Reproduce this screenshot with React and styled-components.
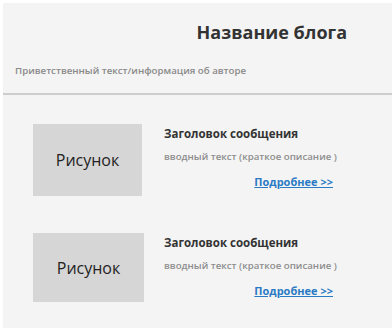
import React from 'react';
import styled, { createGlobalStyle } from 'styled-components';

const Global = createGlobalStyle`
  html, body { margin: 0; padding: 0; background: #ffffff; }
  body { font-family: "Open Sans", "Noto Sans", sans-serif; }
`;

const Page = styled.div`
  width: 392px;
  box-sizing: border-box;
  padding: 3px 0 4px 3px;
`;

const Board = styled.div`
  background: #f4f4f4;
`;

const Header = styled.header`
  height: 92px;
  box-sizing: border-box;
  padding: 17px 45px 0 12px;
  border-bottom: 2px solid #cdcdcd;
  display: flex;
  flex-direction: column;
`;

const BlogTitle = styled.h1`
  margin: 0;
  align-self: flex-end;
  font-size: 18px;
  line-height: 24px;
  font-weight: 700;
  color: #333333;
`;

const Greeting = styled.p`
  margin: 20px 0 0;
  font-size: 9.7px;
  line-height: 14px;
  font-weight: 600;
  color: #8a8a8a;
`;

const Feed = styled.main`
  padding: 29px 0 26px 30px;
  display: flex;
  flex-direction: column;
  gap: 37px;
`;

const Post = styled.article`
  display: grid;
  grid-template-columns: 131px 1fr;
  align-items: start;
`;

const Picture = styled.div`
  width: ${p => p.$w}px;
  height: ${p => p.$h}px;
  background: #d6d6d6;
  display: flex;
  align-items: center;
  justify-content: center;
  font-size: 16px;
  color: #222222;
`;

const Body = styled.div`
  width: 176px;
  padding-top: 2px;
  display: flex;
  flex-direction: column;
`;

const PostTitle = styled.h2`
  margin: 0;
  font-size: 11.5px;
  line-height: 15px;
  font-weight: 700;
  color: #333333;
`;

const Intro = styled.p`
  margin: 9px 0 0;
  font-size: 9.7px;
  line-height: 13px;
  font-weight: 600;
  color: #8e8e8e;
  white-space: nowrap;
`;

const More = styled.a`
  margin: 12px 7px 0 0;
  align-self: flex-end;
  font-size: 11px;
  line-height: 14px;
  font-weight: 700;
  color: #2a7bc4;
  text-decoration: underline;
`;

const posts = [
  { w: 109, h: 72 },
  { w: 111, h: 69 },
];

export default function App() {
  return (
    <Page>
      <Global />
      <Board>
        <Header>
          <BlogTitle>Название блога</BlogTitle>
          <Greeting>Приветственный текст/информация об авторе</Greeting>
        </Header>
        <Feed>
          {posts.map((p, i) => (
            <Post key={i}>
              <Picture $w={p.w} $h={p.h}>Рисунок</Picture>
              <Body>
                <PostTitle>Заголовок сообщения</PostTitle>
                <Intro>вводный текст (краткое описание )</Intro>
                <More href="#">Подробнее &gt;&gt;</More>
              </Body>
            </Post>
          ))}
        </Feed>
      </Board>
    </Page>
  );
}
